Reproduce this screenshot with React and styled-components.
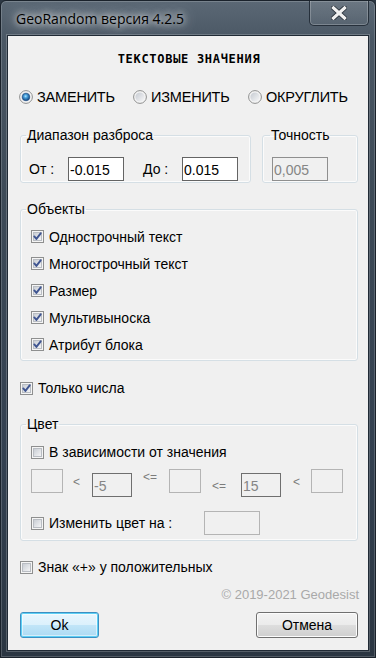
import React, { useId } from 'react'
import styled, { createGlobalStyle } from 'styled-components'

const GlobalStyle = createGlobalStyle`
  html, body {
    margin: 0;
    padding: 0;
    background: #2c3743;
  }
  body {
    font-family: "Liberation Sans", Arial, sans-serif;
    color: #000;
  }
  * {
    box-sizing: border-box;
  }
`

const Window = styled.div`
  width: 376px;
  height: 658px;
  display: flex;
  flex-direction: column;
  border: 1px solid #1a222b;
  border-radius: 6px 6px 0 0;
  padding: 0 6px 6px 6px;
  overflow: hidden;
  background: linear-gradient(
    180deg,
    #5b6875 0%,
    #4a5764 6%,
    #3d4a57 30%,
    #334050 70%,
    #2b3642 100%
  );
  box-shadow: inset 0 0 0 1px rgba(255, 255, 255, 0.18);
`

const TitleBar = styled.div`
  height: 34px;
  display: flex;
  align-items: flex-start;
  padding-left: 3px;
`

const Title = styled.div`
  margin-top: 8px;
  font-family: "Open Sans", "Noto Sans", sans-serif;
  font-size: 14px;
  line-height: 20px;
  color: #000;
  padding: 0 6px;
  text-shadow: 0 0 6px rgba(255, 255, 255, 0.95), 0 0 12px rgba(255, 255, 255, 0.8),
    0 0 18px rgba(255, 255, 255, 0.6);
`

const CloseButton = styled.div`
  margin-left: auto;
  margin-top: -1px;
  width: 60px;
  height: 26px;
  display: flex;
  align-items: center;
  justify-content: center;
  border: 1px solid #26303b;
  border-top: none;
  border-radius: 0 0 5px 5px;
  background: linear-gradient(180deg, rgba(255, 255, 255, 0.1), rgba(255, 255, 255, 0.04));
  box-shadow: inset 0 0 0 1px rgba(255, 255, 255, 0.22);
`

const Client = styled.div`
  flex: 1;
  display: flex;
  flex-direction: column;
  background: #f0f0f0;
  border: 1px solid #202a35;
  padding: 0 10px 11px 12px;
  box-shadow: 0 0 0 1px rgba(255, 255, 255, 0.2);
`

const Heading = styled.div`
  margin-top: 15px;
  text-align: center;
  font-family: "DejaVu Sans Mono", "Liberation Mono", monospace;
  font-weight: bold;
  font-size: 12px;
  line-height: 16px;
  letter-spacing: 0.7px;
`

const RadioRow = styled.div`
  margin-top: 20px;
  margin-left: -1px;
  display: flex;
  height: 20px;
  align-items: center;
`

const RadioItem = styled.label`
  display: flex;
  align-items: center;
  width: ${({ $w }) => $w}px;
  font-size: 14.5px;
  line-height: 20px;
  letter-spacing: -0.2px;
`

const Svg = styled.svg`
  flex: none;
  width: ${({ $size }) => $size}px;
  height: ${({ $size }) => $size}px;
  margin-right: ${({ $gap }) => $gap}px;
`

const GroupRow = styled.div`
  margin-top: 20px;
  display: flex;
  gap: 11px;
`

const Group = styled.fieldset`
  margin: ${({ $mt }) => $mt || 0}px 0 0 0;
  padding: 0;
  width: ${({ $w }) => ($w ? `${$w}px` : 'auto')};
  border: 1px solid #d5dfe5;
  border-radius: 3px;
  box-shadow: inset 0 0 0 1px rgba(255, 255, 255, 0.7);
`

const Legend = styled.legend`
  margin-left: ${({ $indent }) => $indent}px;
  padding: 0 1px;
  font-size: 14px;
  line-height: 16px;
`

const GroupBody = styled.div`
  padding: ${({ $pad }) => $pad};
`

const FieldRow = styled.div`
  display: flex;
  align-items: center;
  height: 24px;
`

const FieldLabel = styled.span`
  width: 39px;
  margin-left: ${({ $ml }) => $ml || 0}px;
  font-size: 14px;
`

const TextBox = styled.input`
  width: ${({ $w }) => $w}px;
  height: 24px;
  margin: 0;
  margin-top: ${({ $mt }) => $mt || 0}px;
  padding: 1px 1px 0 1px;
  align-self: flex-start;
  border: 1px solid ${({ $border }) => $border || '#646464'};
  background: ${({ disabled }) => (disabled ? '#f0f0f0' : '#fff')};
  color: ${({ disabled }) => (disabled ? '#8a8a8a' : '#000')};
  font-family: "Liberation Sans", Arial, sans-serif;
  font-size: 14px;
  line-height: 16px;
  vertical-align: top;
  outline: none;
  &:disabled {
    color: #858585;
    -webkit-text-fill-color: #858585;
  }
`

const CheckRow = styled.label`
  display: flex;
  align-items: center;
  height: ${({ $h }) => $h || 20}px;
  margin-top: ${({ $mt }) => $mt || 0}px;
  font-size: 14px;
  line-height: 16px;
`

const CheckText = styled.span`
  width: ${({ $w }) => ($w ? `${$w}px` : 'auto')};
`

const ObjectRow = styled(CheckRow)`
  height: 27px;
`

const RangeRow = styled.div`
  margin-top: 7px;
  height: 27px;
  display: flex;
  align-items: flex-start;
`

const Sign = styled.span`
  width: ${({ $w }) => $w}px;
  padding-left: ${({ $pl }) => $pl}px;
  margin-top: ${({ $mt }) => $mt}px;
  font-size: 12px;
  line-height: 14px;
  color: #7c7c7c;
`

const Copyright = styled.div`
  margin-top: 10px;
  margin-right: -1px;
  text-align: right;
  font-size: 13px;
  line-height: 16px;
  color: #a9a9a9;
`

const ButtonRow = styled.div`
  margin-top: 9px;
  display: flex;
  justify-content: space-between;
`

const Button = styled.button`
  width: ${({ $w }) => $w}px;
  height: 26px;
  margin: 0;
  padding: 0;
  font-family: "Liberation Sans", Arial, sans-serif;
  font-size: 14px;
  color: #000;
  border-radius: 3px;
  border: 1px solid ${({ $primary }) => ($primary ? '#3c8fc2' : '#707070')};
  background: ${({ $primary }) =>
    $primary
      ? 'linear-gradient(180deg, #e9f6fd 0%, #dcf1fc 48%, #c1e5f8 52%, #acdaf3 100%)'
      : 'linear-gradient(180deg, #f3f3f3 0%, #ebebeb 48%, #dddddd 52%, #cfcfcf 100%)'};
  box-shadow: ${({ $primary }) =>
    $primary
      ? 'inset 0 0 0 1px #5ed0f5, inset 0 0 0 2px rgba(255,255,255,0.5)'
      : 'inset 0 0 0 1px #fcfcfc'};
`

const CheckBox = ({ checked }) => {
  const id = 'cb' + useId().replace(/[^a-zA-Z0-9]/g, '')
  return (
    <Svg $size={13} $gap={5} viewBox="0 0 13 13">
      <defs>
        <linearGradient id={id} x1="0" y1="0" x2="1" y2="1">
          <stop offset="0" stopColor="#c6cbd2" />
          <stop offset="1" stopColor="#f7f7f8" />
        </linearGradient>
      </defs>
      <rect x="0.5" y="0.5" width="12" height="12" fill="#f5f5f5" stroke="#8e8f8f" />
      <rect x="2.5" y="2.5" width="8" height="8" fill={`url(#${id})`} stroke="#b9bdc3" />
      {checked && (
        <path
          d="M3.3 6.4 L5.4 8.9 L9.7 3.3"
          fill="none"
          stroke="#3f5591"
          strokeWidth="1.9"
          strokeLinecap="round"
          strokeLinejoin="round"
        />
      )}
    </Svg>
  )
}

const Radio = ({ checked }) => {
  const id = 'rb' + useId().replace(/[^a-zA-Z0-9]/g, '')
  return (
    <Svg $size={14} $gap={4} viewBox="0 0 14 14">
      <defs>
        <linearGradient id={`${id}g`} x1="0" y1="0" x2="1" y2="1">
          <stop offset="0" stopColor="#c5cad1" />
          <stop offset="1" stopColor="#f7f7f8" />
        </linearGradient>
        <radialGradient id={`${id}b`} cx="0.45" cy="0.4" r="0.6">
          <stop offset="0" stopColor="#b5e6fd" />
          <stop offset="0.35" stopColor="#4aa3de" />
          <stop offset="1" stopColor="#103f78" />
        </radialGradient>
      </defs>
      <circle cx="7" cy="7" r="6.4" fill="#f4f4f4" stroke="#8e8f8f" />
      <circle cx="7" cy="7" r="4.6" fill={`url(#${id}g)`} />
      {checked && <circle cx="7" cy="7" r="3.8" fill={`url(#${id}b)`} stroke="#1d4b83" strokeWidth="0.6" />}
    </Svg>
  )
}

const CloseGlyph = () => (
  <svg width="16" height="14" viewBox="0 0 16 14">
    <path d="M2.5 2 L13.5 12 M13.5 2 L2.5 12" stroke="#2a323b" strokeWidth="5" strokeLinecap="square" />
    <path d="M2.5 2 L13.5 12 M13.5 2 L2.5 12" stroke="#f0f0f0" strokeWidth="3.2" strokeLinecap="square" />
  </svg>
)

const objects = [
  'Однострочный текст',
  'Многострочный текст',
  'Размер',
  'Мультивыноска',
  'Атрибут блока',
]

export default function App() {
  return (
    <>
      <GlobalStyle />
      <Window>
        <TitleBar>
          <Title>GeoRandom версия 4.2.5</Title>
          <CloseButton>
            <CloseGlyph />
          </CloseButton>
        </TitleBar>
        <Client>
          <Heading>ТЕКСТОВЫЕ ЗНАЧЕНИЯ</Heading>

          <RadioRow>
            <RadioItem $w={114}>
              <Radio checked />
              ЗАМЕНИТЬ
            </RadioItem>
            <RadioItem $w={115}>
              <Radio />
              ИЗМЕНИТЬ
            </RadioItem>
            <RadioItem $w={110}>
              <Radio />
              ОКРУГЛИТЬ
            </RadioItem>
          </RadioRow>

          <GroupRow>
            <Group $w={231}>
              <Legend $indent={5}>Диапазон разброса</Legend>
              <GroupBody $pad="14px 0 1px 8px">
                <FieldRow>
                  <FieldLabel>От :</FieldLabel>
                  <TextBox $w={56} readOnly defaultValue="-0.015" />
                  <FieldLabel $ml={19}>До :</FieldLabel>
                  <TextBox $w={56} readOnly defaultValue="0.015" />
                </FieldRow>
              </GroupBody>
            </Group>
            <Group $w={96}>
              <Legend $indent={7}>Точность</Legend>
              <GroupBody $pad="14px 0 1px 9px">
                <FieldRow>
                  <TextBox $w={56} $border="#8f8f8f" disabled defaultValue="0,005" />
                </FieldRow>
              </GroupBody>
            </Group>
          </GroupRow>

          <Group $mt={18}>
            <Legend $indent={5}>Объекты</Legend>
            <GroupBody $pad="6px 10px 2px 10px">
              {objects.map((name) => (
                <ObjectRow key={name}>
                  <CheckBox checked />
                  {name}
                </ObjectRow>
              ))}
            </GroupBody>
          </Group>

          <CheckRow $mt={17}>
            <CheckBox checked />
            Только числа
          </CheckRow>

          <Group $mt={18}>
            <Legend $indent={5}>Цвет</Legend>
            <GroupBody $pad="10px 10px 5px 10px">
              <CheckRow>
                <CheckBox />
                В зависимости от значения
              </CheckRow>
              <RangeRow>
                <TextBox $w={32} $border="#b4b4b4" disabled />
                <Sign $w={29} $pl={10} $mt={6}>&lt;</Sign>
                <TextBox $w={40} $mt={4} $border="#6f6f6f" disabled defaultValue="-5" />
                <Sign $w={37} $pl={11} $mt={1}>&lt;=</Sign>
                <TextBox $w={32} $border="#b4b4b4" disabled />
                <Sign $w={40} $pl={11} $mt={10}>&lt;=</Sign>
                <TextBox $w={40} $mt={4} $border="#6f6f6f" disabled defaultValue="15" />
                <Sign $w={30} $pl={12} $mt={6}>&lt;</Sign>
                <TextBox $w={32} $border="#b4b4b4" disabled />
              </RangeRow>
              <CheckRow $h={24} $mt={15}>
                <CheckBox />
                <CheckText $w={155}>Изменить цвет на :</CheckText>
                <TextBox $w={56} $border="#b4b4b4" disabled />
              </CheckRow>
            </GroupBody>
          </Group>

          <CheckRow $mt={16}>
            <CheckBox />
            Знак «+» у положительных
          </CheckRow>

          <Copyright>© 2019-2021 Geodesist</Copyright>

          <ButtonRow>
            <Button $primary $w={79}>Ok</Button>
            <Button $w={102}>Отмена</Button>
          </ButtonRow>
        </Client>
      </Window>
    </>
  )
}
